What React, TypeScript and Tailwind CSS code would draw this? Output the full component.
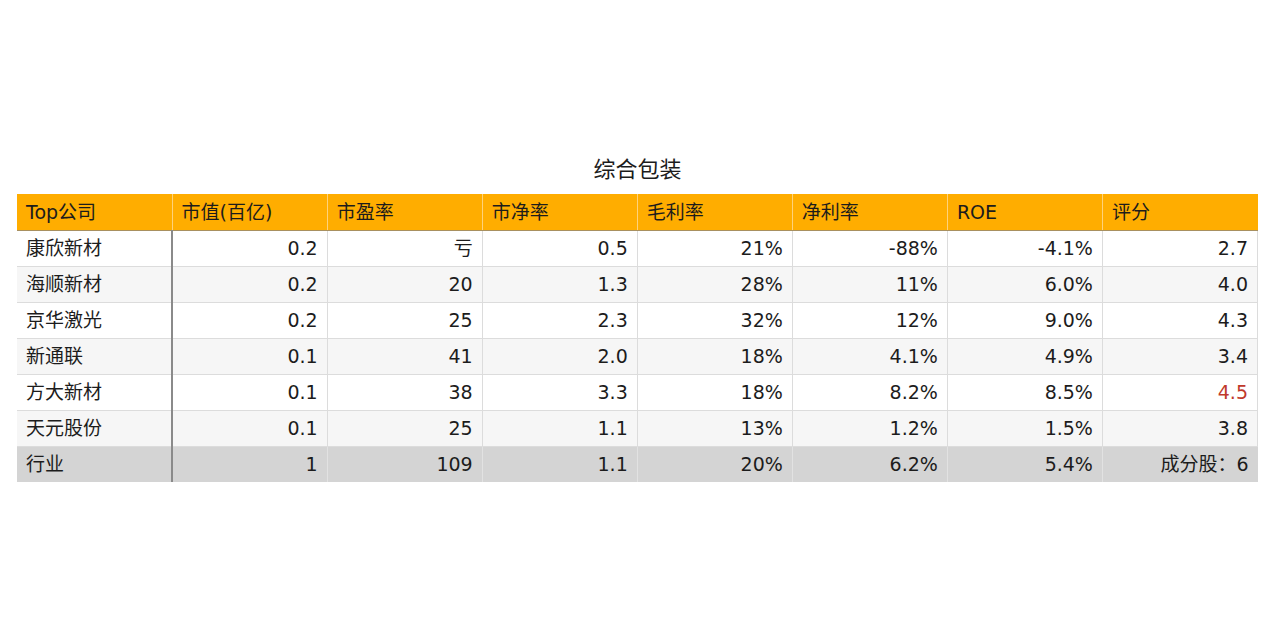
import React from 'react';

interface Row {
  name: string;
  values: string[];
  highlight?: boolean;
}

const headers = ['Top公司', '市值(百亿)', '市盈率', '市净率', '毛利率', '净利率', 'ROE', '评分'];

const rows: Row[] = [
  { name: '康欣新材', values: ['0.2', '亏', '0.5', '21%', '-88%', '-4.1%', '2.7'] },
  { name: '海顺新材', values: ['0.2', '20', '1.3', '28%', '11%', '6.0%', '4.0'] },
  { name: '京华激光', values: ['0.2', '25', '2.3', '32%', '12%', '9.0%', '4.3'] },
  { name: '新通联', values: ['0.1', '41', '2.0', '18%', '4.1%', '4.9%', '3.4'] },
  { name: '方大新材', values: ['0.1', '38', '3.3', '18%', '8.2%', '8.5%', '4.5'], highlight: true },
  { name: '天元股份', values: ['0.1', '25', '1.1', '13%', '1.2%', '1.5%', '3.8'] },
];

const industry = ['1', '109', '1.1', '20%', '6.2%', '5.4%', '成分股：6'];

const App: React.FC = () => {
  return (
    <div
      className="w-[1280px] h-[640px] bg-white flex flex-col pt-[155px] pl-[17px] text-[#1c1c1c]"
      style={{ fontFamily: '"DejaVu Sans", "Noto Sans CJK SC", sans-serif' }}
    >
      <div className="w-[1241px] text-center text-[22px] leading-[30px] mb-[9px]">综合包装</div>
      <table className="border-collapse w-[1241px] table-fixed text-[19px]">
        <thead>
          <tr className="bg-[#ffad00] h-[36px]">
            {headers.map((h, i) => (
              <th
                key={h}
                className={`font-normal text-left px-[9px] border-b border-b-[#a89060] ${
                  i > 0 ? 'border-l border-l-[#ffd27a]' : ''
                }`}
              >
                {h}
              </th>
            ))}
          </tr>
        </thead>
        <tbody>
          {rows.map((r, ri) => (
            <tr key={r.name} className={`h-[36px] ${ri % 2 === 1 ? 'bg-[#f6f6f6]' : 'bg-white'}`}>
              <td className="px-[9px] border-b border-[#dcdcdc] border-r-2 border-r-[#8a8a8a]">{r.name}</td>
              {r.values.map((v, vi) => (
                <td
                  key={vi}
                  className={`px-[9px] text-right border border-[#dcdcdc] ${
                    r.highlight && vi === 6 ? 'text-[#c0392b]' : ''
                  }`}
                >
                  {v}
                </td>
              ))}
            </tr>
          ))}
          <tr className="h-[36px] bg-[#d4d4d4]">
            <td className="px-[9px] border-r-2 border-r-[#8a8a8a]">行业</td>
            {industry.map((v, vi) => (
              <td key={vi} className="px-[9px] text-right border-l border-l-[#e2e2e2]">
                {v}
              </td>
            ))}
          </tr>
        </tbody>
      </table>
    </div>
  );
};

export default App;
